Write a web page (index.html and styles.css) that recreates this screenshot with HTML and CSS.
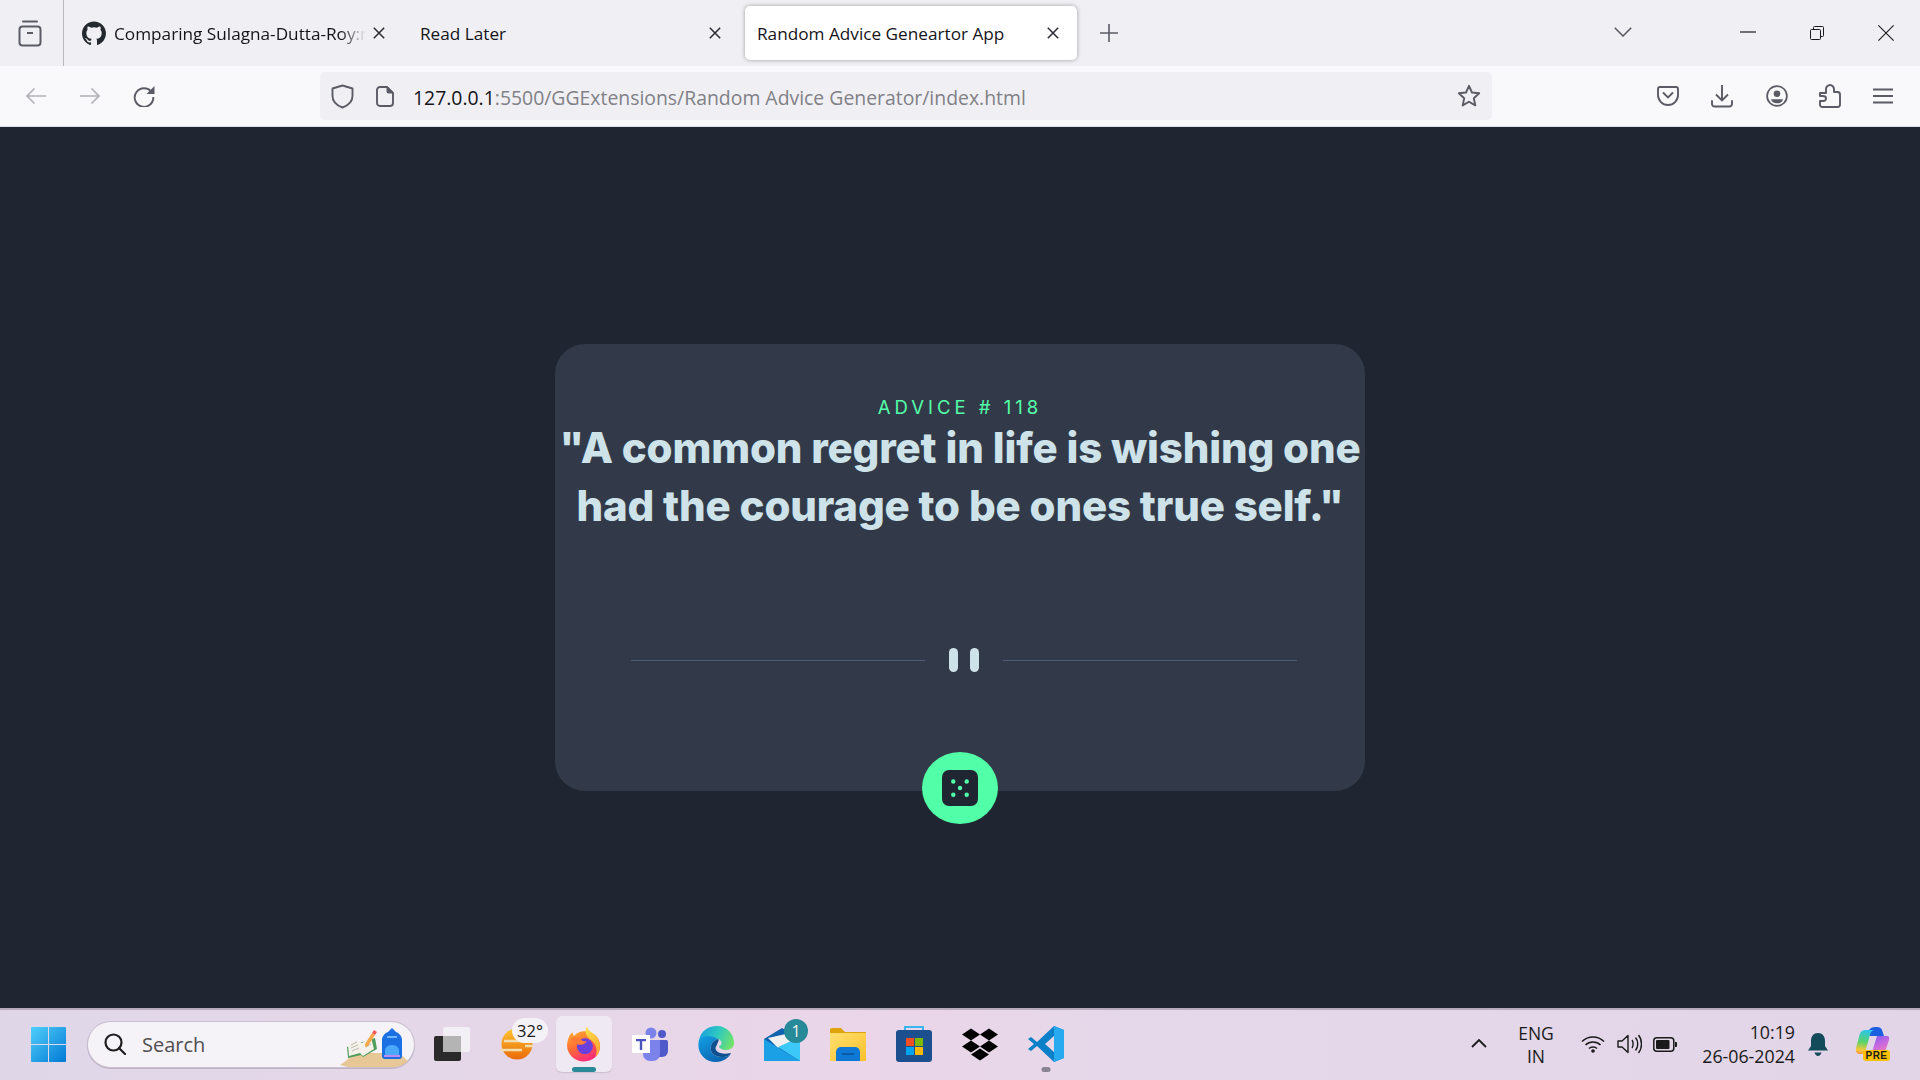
FILE: index.html
```html
<!DOCTYPE html>
<html lang="en">
<head>
<meta charset="utf-8">
<title>Random Advice Geneartor App</title>
<link rel="stylesheet" href="styles.css">
</head>
<body>
<div class="window">
  <header class="tabstrip">
    <div class="tabs-menu">
      <svg class="ic-archive" viewBox="0 0 24 28" fill="none" stroke="#5b5b66" stroke-width="2"><path d="M5 2.500h14" stroke-linecap="round"/><rect x="1.500" y="7.500" width="21" height="19" rx="3"/><path d="M9 14h6"/></svg>
    </div>
    <div class="tabs">
      <div class="tab">
        <svg class="favicon" viewBox="0 0 24 24"><path fill="#24292f" d="M12 .5C5.370.5 0 5.870 0 12.500c0 5.300 3.440 9.800 8.200 11.390.6.110.82-.26.82-.58v-2.030c-3.340.73-4.040-1.610-4.040-1.610-.55-1.390-1.330-1.760-1.330-1.760-1.090-.74.08-.73.08-.73 1.200.09 1.840 1.240 1.840 1.240 1.070 1.830 2.810 1.300 3.500 1 .11-.78.42-1.310.76-1.610-2.670-.3-5.470-1.330-5.470-5.930 0-1.310.47-2.380 1.240-3.220-.13-.3-.54-1.520.12-3.180 0 0 1-.32 3.300 1.230a11.500 11.500 0 016 0c2.290-1.550 3.300-1.230 3.300-1.230.66 1.660.25 2.880.12 3.180.77.84 1.230 1.910 1.230 3.220 0 4.610-2.810 5.630-5.480 5.920.43.37.81 1.100.81 2.220v3.290c0 .32.22.7.82.58A12.010 12.010 0 0024 12.500C24 5.870 18.630.5 12 .5z"/></svg>
        <span class="tab-title fade">Comparing Sulagna-Dutta-Roy:r</span>
        <svg class="tab-close" viewBox="0 0 12 12" fill="none" stroke="#2b2a33" stroke-width="1.500"><path d="M.8.8l10.400 10.400M11.200.8L.8 11.200"/></svg>
      </div>
      <div class="tab">
        <span class="tab-title">Read Later</span>
        <svg class="tab-close" viewBox="0 0 12 12" fill="none" stroke="#2b2a33" stroke-width="1.500"><path d="M.8.8l10.400 10.400M11.200.8L.8 11.200"/></svg>
      </div>
      <div class="tab active">
        <span class="tab-title">Random Advice Geneartor App</span>
        <svg class="tab-close" viewBox="0 0 12 12" fill="none" stroke="#2b2a33" stroke-width="1.500"><path d="M.8.8l10.400 10.400M11.200.8L.8 11.200"/></svg>
      </div>
    </div>
    <svg class="ic-plus" viewBox="0 0 18 18" fill="none" stroke="#5b5b66" stroke-width="1.600"><path d="M9 0v18M0 9h18"/></svg>
    <div class="strip-right">
      <svg class="ic-chevron" viewBox="0 0 18 10" fill="none" stroke="#5b5b66" stroke-width="1.600"><path d="M.8.8L9 9l8.200-8.200"/></svg>
      <svg class="ic-min" viewBox="0 0 16 2"><path d="M0 1h16" stroke="#1a1a1a" stroke-width="1.200"/></svg>
      <svg class="ic-restore" viewBox="0 0 14 14" fill="none" stroke="#1a1a1a" stroke-width="1"><rect x=".5" y="3.500" width="10" height="10" rx="1"/><path d="M3.500 3.500V1.500a1 1 0 011-1h8a1 1 0 011 1v8a1 1 0 01-1 1h-2"/></svg>
      <svg class="ic-winclose" viewBox="0 0 16 16" fill="none" stroke="#1a1a1a" stroke-width="1.100"><path d="M.4.4l15.200 15.200M15.600.4L.4 15.600"/></svg>
    </div>
  </header>

  <nav class="navbar">
    <div class="nav-left">
      <svg class="ic-nav" viewBox="0 0 22 18" fill="none" stroke="#b1b1b6" stroke-width="1.700"><path d="M21 9H2M9.500 1.500L2 9l7.500 7.500"/></svg>
      <svg class="ic-nav" viewBox="0 0 22 18" fill="none" stroke="#b1b1b6" stroke-width="1.700"><path d="M1 9h19M12.500 1.500L20 9l-7.500 7.500"/></svg>
      <svg class="ic-reload" viewBox="0 0 22 22" fill="none" stroke="#5b5b66" stroke-width="1.900"><path d="M18.500 7A9.300 9.300 0 1020.300 12"/><path fill="#5b5b66" stroke="none" d="M21.500 1v8h-8z"/></svg>
    </div>
    <div class="urlbar">
      <svg class="ic-shield" viewBox="0 0 23 25" fill="none" stroke="#5b5b66" stroke-width="1.900"><path d="M11.500 1.500L21.500 4.500V12c0 6-4.500 9.500-10 11.500C6 21.500 1.500 18 1.500 12V4.500z" stroke-linejoin="round"/></svg>
      <svg class="ic-page" viewBox="0 0 18 21" fill="none" stroke="#5b5b66" stroke-width="1.900"><path d="M4 1h7l6 6v10a3 3 0 01-3 3H4a3 3 0 01-3-3V4a3 3 0 013-3z"/><path fill="#5b5b66" stroke="none" d="M10.500 1H12l5 5v1.500h-4.500a2 2 0 01-2-2z"/></svg>
      <span class="url"><span class="url-host">127.0.0.1</span>:5500/GGExtensions/Random Advice Generator/index.html</span>
      <svg class="ic-star" viewBox="0 0 24 24" fill="none" stroke="#5b5b66" stroke-width="1.900" stroke-linejoin="round"><path d="M12 1.800l3 6.700 7.200.8-5.400 4.900 1.500 7.200-6.300-3.700-6.300 3.700 1.500-7.200L1.800 9.300 9 8.500z"/></svg>
    </div>
    <div class="nav-right">
      <svg class="ic-tool" viewBox="0 0 22 22" fill="none" stroke="#5b5b66" stroke-width="1.900"><path d="M3 2h16a2 2 0 012 2v6a10 10 0 01-20 0V4a2 2 0 012-2z"/><path d="M6.500 8l4.500 4.500L15.500 8" stroke-linecap="round"/></svg>
      <svg class="ic-tool" viewBox="0 0 22 24" fill="none" stroke="#5b5b66" stroke-width="1.900"><path d="M11 1v15M5 10.500l6 6 6-6"/><path d="M1 17v3a2.500 2.500 0 002.500 2.500h15A2.500 2.500 0 0021 20v-3" stroke-linecap="round"/></svg>
      <svg class="ic-tool ic-account" viewBox="0 0 24 24" fill="none" stroke="#5b5b66" stroke-width="1.900"><circle cx="12" cy="12" r="10.800"/><circle cx="12" cy="9.500" r="3.600" fill="#5b5b66" stroke="none"/><path fill="#5b5b66" stroke="none" d="M5.500 15.500h13c-.5 3-3 4.500-6.500 4.500s-6-1.500-6.500-4.500z"/></svg>
      <svg class="ic-tool" viewBox="0 0 22 24" fill="none" stroke="#5b5b66" stroke-width="1.900" stroke-linejoin="round"><path d="M1 9H7V5C7 3 9 1 11 1C13 1 15 3 15 5V8H18.500C20 8 21 9 21 10.500V20.500C21 22 20 23 18.500 23H3C1.500 23 1 22 1 20.500V17H4C6 17 7 16 7 14.500C7 13 6 12 4 12H1Z"/></svg>
      <svg class="ic-tool ic-menu" viewBox="0 0 20 16" stroke="#5b5b66" stroke-width="1.900"><path d="M0 1.500h20M0 8h20M0 14.500h20"/></svg>
    </div>
  </nav>

  <main class="page">
    <section class="card">
      <p class="advice-id">ADVICE # 118</p>
      <h1 class="quote">"A common regret in life is wishing one had the courage to be ones true self."</h1>
      <div class="divider">
        <span class="rule"></span>
        <span class="pause"><i></i><i></i></span>
        <span class="rule"></span>
      </div>
      <button class="dice" type="button" aria-label="New advice">
        <svg viewBox="0 0 36 36"><rect width="36" height="36" rx="7" fill="#1f2632"/><g fill="#52ffa8"><circle cx="11.300" cy="11.500" r="2.200"/><circle cx="24.700" cy="11.500" r="2.200"/><circle cx="18" cy="18" r="2.200"/><circle cx="11.300" cy="24.800" r="2.200"/><circle cx="24.700" cy="24.800" r="2.200"/></g></svg>
      </button>
    </section>
  </main>

  <footer class="taskbar">
    <div class="slot slot-start">
      <svg class="ic-win" viewBox="0 0 35 35"><defs><linearGradient id="w" x1="0" y1="0" x2="1" y2="1"><stop offset="0" stop-color="#4fd0fb"/><stop offset="1" stop-color="#0278d4"/></linearGradient></defs><path fill="url(#w)" d="M1 0h16v17H0V1a1 1 0 011-1zM18 0h16a1 1 0 011 1v16H18zM0 18h17v17H1a1 1 0 01-1-1zM18 18h17v16a1 1 0 01-1 1H18z"/></svg>
    </div>
    <div class="search">
      <svg class="ic-search" viewBox="0 0 22 22" fill="none" stroke="#1f1f1f" stroke-width="2.200"><circle cx="9.500" cy="9.500" r="8"/><path d="M15 15l6 6" stroke-linecap="round"/></svg>
      <span class="search-label">Search</span>
      <svg class="search-art" viewBox="0 0 68 39">
        <path fill="#e6c795" d="M0 37c5-3 10-8 14-12h44c3 0 7 6 10 8-3 3-9 6-14 6H8z"/>
        <path fill="#4f9e5c" d="M7 19l1 11 13-3 2 2 14-8-2-11z"/>
        <path fill="#f3f1ea" d="M8 17l7-5 7 3 9-6 3 12-11 7-3-3-11 3z"/>
        <path stroke="#bdbab0" stroke-width="1" d="M11 17l6-3M11 20l7-3M12 23l7-3M26 16l5-3M26 19l5-3"/>
        <path fill="#f7a84a" d="M25 16l7-11 3 2-7 11-3 1z"/>
        <path fill="#ef5d5a" d="M32 5l2-3 3 2-2 3z"/>
        <path fill="#1a6fe2" d="M42 12c0-4 3-7 6-8l4-4 4 4c3 1 6 4 6 8v16c0 2-1 3-3 3H45c-2 0-3-1-3-3z"/>
        <path fill="#4aa8ff" d="M45 23c0-4 3-6 7-6s7 2 7 6v4H45z"/>
        <path fill="#c08bf0" d="M44 27h16v2H44z"/>
        <path fill="#6db8ff" d="M47 8h10v2H47z"/>
      </svg>
    </div>
    <div class="apps">
      <div class="slot">
        <svg class="ic-taskview" viewBox="0 0 36 34"><rect y="9" width="27" height="25" rx="2" fill="#2a2a2a"/><rect x="9" width="27" height="25" rx="2" fill="#f3f0f5"/><rect x="9" y="9" width="18" height="16" fill="#b4b4b4"/></svg>
      </div>
      <div class="slot">
        <svg class="ic-weather" viewBox="0 0 36 32"><defs><linearGradient id="sun" x1="0" y1="0" x2="0" y2="1"><stop offset="0" stop-color="#fcc52f"/><stop offset="1" stop-color="#ea6a0a"/></linearGradient></defs><circle cx="19" cy="16" r="15.500" fill="url(#sun)"/><path stroke="#f3dcae" stroke-width="2.500" d="M6 13h18M2 22h22M27 18h8"/></svg>
        <span class="temp">32°</span>
      </div>
      <div class="slot slot-active">
        <svg class="ic-app ic-firefox" viewBox="0 0 36 38"><defs><linearGradient id="ff" x1="0" y1="0" x2=".5" y2="1"><stop offset="0" stop-color="#ffb22c"/><stop offset=".55" stop-color="#ff6a37"/><stop offset="1" stop-color="#ff2d78"/></linearGradient><linearGradient id="ffy" x1="0" y1="0" x2="1" y2="1"><stop offset="0" stop-color="#ffe14a"/><stop offset="1" stop-color="#ffa52c"/></linearGradient></defs><path fill="url(#ff)" d="M1 15C2 11 4 8 6 7c0 2 .5 3 1.500 4C10 8 14 6 18 6c6 0 17 4 17 16 0 9-7 16-17 16C8 38 0 30 0 21c0-2 .5-4 1-6z"/><path fill="url(#ffy)" d="M21 1c1 3 3 5 6 7 5 3 8 9 8 14 0 5-2 9-5 11 3-7 1-14-5-18-4-3-7-8-4-14z"/><circle cx="19" cy="22" r="8.500" fill="#6b3fdc"/><path fill="#ff7b36" d="M4 14c3-2 8-2 11 1 2 2 4 2 6 1-1 3-5 5-9 4-4 0-7-3-8-6z"/></svg>
        <span class="running wide"></span>
      </div>
      <div class="slot">
        <svg class="ic-app" viewBox="0 0 36 36"><circle cx="30" cy="8" r="4" fill="#5059c9"/><path fill="#5059c9" d="M24 14h10a2 2 0 012 2v9a6 6 0 01-6 6h-6z"/><circle cx="19" cy="7" r="5.500" fill="#7b83eb"/><path fill="#7b83eb" d="M11 14h16a1 1 0 011 1v13a7 7 0 01-7 7h-3a7 7 0 01-7-7z"/><rect y="9" width="18" height="18" fill="#fff"/><path fill="#4b53bc" d="M4 13h10v2.200h-3.800V24H7.800v-8.800H4z"/></svg>
      </div>
      <div class="slot">
        <svg class="ic-app" viewBox="0 0 36 36"><defs><linearGradient id="e1" x1="0" y1=".3" x2="1" y2=".6"><stop offset="0" stop-color="#1a9fde"/><stop offset=".5" stop-color="#2fc9c0"/><stop offset="1" stop-color="#72e268"/></linearGradient><linearGradient id="e2" x1="0" y1="0" x2=".7" y2="1"><stop offset="0" stop-color="#13a0e4"/><stop offset="1" stop-color="#0a62b0"/></linearGradient></defs><path fill="url(#e1)" d="M1 14C3 5 10 0 19 0c10 0 17 8 17 17 0 4-3 7-8 7-4 0-7-2-7-4 4-1 3-6-1-7-7-2-16-2-19 1z"/><path fill="url(#e2)" d="M1 14C-2 26 6 36 18 36c6 0 11-3 14-7-5 3-14 3-18-2-3-5-1-12 6-14C14 9 4 9 1 14z"/><path fill="#11508f" d="M20 13c-7 2-9 9-6 14 4 5 13 5 18 2l1-2c-5 1-10 1-13-1-3-2-3-5-1-7 0-2 3-5 1-6z"/></svg>
      </div>
      <div class="slot">
        <svg class="ic-mail" viewBox="0 0 36 33"><path fill="#0f62ae" d="M0 11L18 0l18 11v22H0z"/><path fill="#eef0f2" d="M4 10l22-5 5 7-17 8z"/><path fill="#3cc8f8" d="M14 19L36 9v24z"/><path fill="#1ba0e6" d="M0 11l36 22H0z"/></svg>
        <span class="mail-badge">1</span>
      </div>
      <div class="slot">
        <svg class="ic-mail" viewBox="0 0 36 33"><path fill="#dfa40c" d="M0 2a2 2 0 012-2h9l4 4h21v5H0z"/><defs><linearGradient id="fo" x1="0" y1="0" x2="1" y2="1"><stop offset="0" stop-color="#ffe070"/><stop offset="1" stop-color="#fdc02a"/></linearGradient></defs><path fill="url(#fo)" d="M0 5h36v28H0z"/><path fill="#0f78d4" d="M6 24a5 5 0 015-5h14a5 5 0 015 5v9H6z"/><path stroke="#0a4f96" stroke-width="1.500" d="M12 26h12"/></svg>
      </div>
      <div class="slot">
        <svg class="ic-app" viewBox="0 0 36 36"><path fill="none" stroke="#37b6f1" stroke-width="2" d="M9 5V1h18v4"/><rect y="4" width="36" height="32" rx="3" fill="#1b4f8d"/><rect x="10" y="12" width="8" height="8" fill="#f25022"/><rect x="19" y="12" width="8" height="8" fill="#7fba00"/><rect x="10" y="21" width="8" height="8" fill="#00a4ef"/><rect x="19" y="21" width="8" height="8" fill="#ffb900"/></svg>
      </div>
      <div class="slot">
        <svg class="ic-mail" viewBox="0 0 36 32"><path d="M9 0l9 6-9 6-9-6zM27 0l9 6-9 6-9-6zM9 12l9 6-9 6-9-6zM27 12l9 6-9 6-9-6zM18 20l9 6-9 6-9-6z"/></svg>
      </div>
      <div class="slot">
        <svg class="ic-app" viewBox="0 0 36 36"><path fill="#0b7fc7" d="M26 0l10 4v28l-10 4L9 20l-6 5-3-2 6-5-6-5 3-2 6 5zM26 10l-9 8 9 8z"/><path fill="#27aaf0" d="M26 0l10 4v28l-10 4z"/></svg>
        <span class="running"></span>
      </div>
    </div>
    <div class="tray">
      <svg class="ic-up" viewBox="0 0 16 9" fill="none" stroke="#1a1a1a" stroke-width="1.800"><path d="M1 8l7-7 7 7"/></svg>
      <div class="lang"><span>ENG</span><span>IN</span></div>
      <svg class="ic-wifi" viewBox="0 0 24 18" fill="none" stroke="#1a1a1a" stroke-width="1.500"><path d="M1 6.500c6-6 16-6 22 0M4.500 10c4-4 11-4 15 0M8 13.500c2-2 6-2 8 0"/><circle cx="12" cy="16" r="1.800" fill="#1a1a1a" stroke="none"/></svg>
      <svg class="ic-sound" viewBox="0 0 25 20" fill="none" stroke="#1a1a1a" stroke-width="1.400"><path d="M1 7h4l6-5.500v17L5 13H1z" stroke-linejoin="round"/><path d="M15 6c1.500 2 1.500 6 0 8M18.500 3.500c3 3.500 3 9.500 0 13M21.500 1c4 5 4 13 0 18"/></svg>
      <svg class="ic-battery" viewBox="0 0 24 15"><rect x=".8" y=".8" width="20" height="13.400" rx="3" fill="none" stroke="#1a1a1a" stroke-width="1.500"/><rect x="3" y="3" width="13.500" height="9" rx="1" fill="#1a1a1a"/><path fill="#1a1a1a" d="M22 5h1a1 1 0 011 1v3a1 1 0 01-1 1h-1z"/></svg>
      <div class="clock"><span>10:19</span><span>26-06-2024</span></div>
      <svg class="ic-bell" viewBox="0 0 20 23" fill="#134b5a"><path d="M10 0c4.500 0 7 3.500 7 8v5l3 4.500H0L3 13V8c0-4.500 2.500-8 7-8z"/><path d="M6.500 19.500h7c-.5 2-2 3.500-3.500 3.500s-3-1.500-3.500-3.500z"/></svg>
      <div class="copilot">
        <svg viewBox="0 0 35 30"><defs><linearGradient id="c1" x1=".5" y1="0" x2=".4" y2="1"><stop offset="0" stop-color="#2cc4ec"/><stop offset=".5" stop-color="#58d46a"/><stop offset=".85" stop-color="#f6c83c"/><stop offset="1" stop-color="#f79a3a"/></linearGradient><linearGradient id="c2" x1=".2" y1="0" x2=".8" y2="1"><stop offset="0" stop-color="#7a5cf0"/><stop offset=".5" stop-color="#c868e0"/><stop offset="1" stop-color="#f880b0"/></linearGradient></defs><path fill="#1b5fe0" d="M14 3q2-3 6-3h2q4 0 5 3l2 6H12z"/><path fill="url(#c2)" d="M22 9h10q3 0 2 4l-3 9q-2 6-7 6H12q4-1 6-6z"/><path fill="url(#c1)" d="M10 3h10q-4 0-5 5l-4 14q-1 4-4 5H5q-5 0-4-6l3-11q1-7 6-7z"/></svg>
        <span class="pre">PRE</span>
      </div>
    </div>
  </footer>
</div>
</body>
</html>
```
FILE: styles.css
```css
* { box-sizing: border-box; }
html, body { margin: 0; height: 100%; overflow: hidden; }
svg { display: block; flex: none; }

.window {
  width: 1920px; height: 1080px;
  display: flex; flex-direction: column;
  font-family: "Open Sans", "Noto Sans", sans-serif;
  color: #15141a;
}

/* Tab strip */
.tabstrip { height: 66px; background: #f0f0f4; display: flex; align-items: center; flex: none; }
.tabs-menu { width: 64px; height: 66px; border-right: 1px solid #b9b9bf; display: flex; align-items: center; padding-left: 18px; }
.ic-archive { width: 24px; height: 28px; margin-top: -14px; transform: translateY(7px); }
.tabs { display: flex; margin-left: 5px; gap: 6px; align-items: center; }
.tab { width: 332px; height: 54px; border-radius: 5px; display: flex; align-items: center; padding: 0 18px 0 13px; }
.tab.active { background: #fff; box-shadow: 0 0 4px rgba(0,0,0,.35); padding-left: 12px; }
.favicon { width: 24px; height: 24px; margin-right: 8px; }
.tab-title { flex: 1; font-size: 17.2px; white-space: nowrap; }
.tab-title.fade { flex: none; width: 252px; margin-right: 7px; -webkit-mask-image: linear-gradient(to right, #000 90%, transparent 100%); mask-image: linear-gradient(to right, #000 90%, transparent 100%); }
.tab-close { width: 12px; height: 12px; }
.ic-plus { width: 18px; height: 18px; margin-left: 23px; }
.strip-right { margin-left: auto; display: flex; align-items: center; padding-right: 26px; }
.ic-chevron { width: 18px; height: 10px; margin-right: 108px; margin-top: -2px; }
.ic-min { width: 16px; height: 2px; margin-right: 54px; margin-top: -2px; }
.ic-restore { width: 14px; height: 14px; margin-right: 54px; }
.ic-winclose { width: 16px; height: 16px; }

/* Nav bar */
.navbar { height: 61px; background: #f9f9fb; display: flex; align-items: center; flex: none; padding-left: 25px; border-bottom: 1px solid #e0e0e4; }
.nav-left { width: 295px; display: flex; align-items: center; gap: 32px; }
.ic-nav { width: 22px; height: 18px; }
.ic-reload { width: 22px; height: 22px; }
.urlbar { width: 1172px; height: 48px; border-radius: 5px; background: #f0f0f4; display: flex; align-items: center; padding-left: 11px; }
.ic-shield { width: 23px; height: 25px; }
.ic-page { width: 18px; height: 21px; margin-left: 22px; }
.url { margin-left: 19px; margin-top: 2px; font-size: 19.4px; color: #808086; white-space: nowrap; flex: 1; }
.url-host { color: #15141a; }
.ic-star { width: 24px; height: 24px; margin-right: 11px; }
.nav-right { display: flex; align-items: center; margin-left: 165px; }
.ic-tool { width: 22px; height: 24px; margin-right: 32px; }
.ic-account { margin-left: 1px; margin-right: 31px; }
.ic-menu { width: 20px; height: 16px; margin-right: 0; }

/* Page */
.page { flex: 1; background: #1f2632; display: flex; align-items: center; justify-content: center; }
.card {
  position: relative; width: 810px; height: 447px;
  background: #323a49; border-radius: 30px;
  display: flex; flex-direction: column; align-items: center;
  padding-top: 51px;
  font-family: Inter, "Open Sans", sans-serif;
}
.advice-id { margin: 0; height: 24px; line-height: 24px; font-size: 18.5px; font-weight: 400; letter-spacing: 4px; color: #52ffa8; text-align: center; }
.quote { margin: 0; width: 810px; font-size: 42px; line-height: 58px; font-weight: 800; color: #cee3e9; text-align: center; letter-spacing: -.18px; }
.divider { display: flex; align-items: center; margin-top: 113px; width: 666px; margin-left: 7px; height: 24px; }
.rule { flex: 1; height: 1px; background: #4f5d74; }
.pause { width: 78px; display: flex; justify-content: center; gap: 12px; }
.pause i { width: 9px; height: 24px; border-radius: 5px; background: #cee3e9; display: block; }
.dice {
  position: absolute; left: 367px; bottom: -33px;
  width: 76px; height: 72px; border: 0; padding: 0; border-radius: 50%;
  background: #52ffa8; display: flex; align-items: center; justify-content: center;
}
.dice svg { width: 36px; height: 36px; }

/* Taskbar */
.taskbar {
  height: 72px; flex: none; display: flex; align-items: center; padding: 0 0 2px 15px;
  border-top: 2px solid #b6aabb;
  background: linear-gradient(90deg, #dfd7e8 0%, #e6d7e8 30%, #ead6e8 45%, #e4d8ea 62%, #e2d5e8 100%);
}
.slot { position: relative; width: 66px; height: 56px; display: flex; align-items: center; justify-content: center; flex: none; }
.slot-start { margin-right: 7px; }
.ic-win { width: 35px; height: 35px; }
.search { width: 326px; height: 45px; border-radius: 23px; background: #f6f3f8; box-shadow: 0 0 0 1px #c9bfd0, 0 1px 0 1px #bdb3c4; display: flex; align-items: center; padding-left: 16px; position: relative; margin-right: 5px; }
.ic-search { width: 22px; height: 22px; }
.search-label { margin-left: 16px; font-size: 20px; color: #4f4f4f; }
.search-art { position: absolute; right: 6px; bottom: 0; width: 68px; height: 39px; }
.apps { display: flex; align-items: center; }
.ic-taskview { width: 36px; height: 34px; }
.ic-weather { width: 36px; height: 32px; margin-left: -5px; }
.temp { position: absolute; left: 27px; top: 2px; width: 36px; height: 25px; border-radius: 13px; background: #f5f2f7; font-size: 16.5px; line-height: 25px; text-align: center; color: #1a1a1a; }
.slot-active { background: #efe9f3; border-radius: 6px; width: 56px; margin: 0 5px; box-shadow: 0 1px 1px rgba(0,0,0,.12); }
.ic-app { width: 36px; height: 36px; }
.ic-firefox { width: 34px; height: 37px; margin-top: -1px; }
.ic-mail { width: 36px; height: 33px; }
.running { position: absolute; left: 50%; bottom: 0; transform: translateX(-50%); width: 9px; height: 5px; border-radius: 3px; background: #8a8393; }
.running.wide { width: 24px; background: #2a8a97; }
.mail-badge { position: absolute; right: 7px; top: 3px; width: 24px; height: 24px; border-radius: 50%; background: #278a98; color: #f2f2f2; font-size: 16px; line-height: 24px; text-align: center; }
.tray { display: flex; align-items: center; margin-left: 392px; color: #1a1a1a; }
.ic-up { width: 16px; height: 9px; margin-top: -2px; }
.lang { width: 60px; margin-left: 19px; margin-top: 1px; display: flex; flex-direction: column; align-items: center; font-size: 17.5px; line-height: 23px; }
.ic-wifi { width: 24px; height: 18px; margin-left: 15px; }
.ic-sound { width: 25px; height: 20px; margin-left: 12px; }
.ic-battery { width: 24px; height: 15px; margin-left: 11px; }
.clock { width: 118px; display: flex; flex-direction: column; align-items: flex-end; font-size: 17.8px; line-height: 24px; }
.ic-bell { width: 20px; height: 23px; margin-left: 13px; }
.copilot { position: relative; width: 35px; height: 34px; margin-left: 27px; }
.copilot svg { width: 35px; height: 30px; }
.pre { position: absolute; right: 0; bottom: 0; width: 27px; height: 11px; background: #fdc100; border-radius: 3px; font: 700 10px/11px "Liberation Sans", sans-serif; letter-spacing: .5px; color: #1a1a1a; text-align: center; }
```
